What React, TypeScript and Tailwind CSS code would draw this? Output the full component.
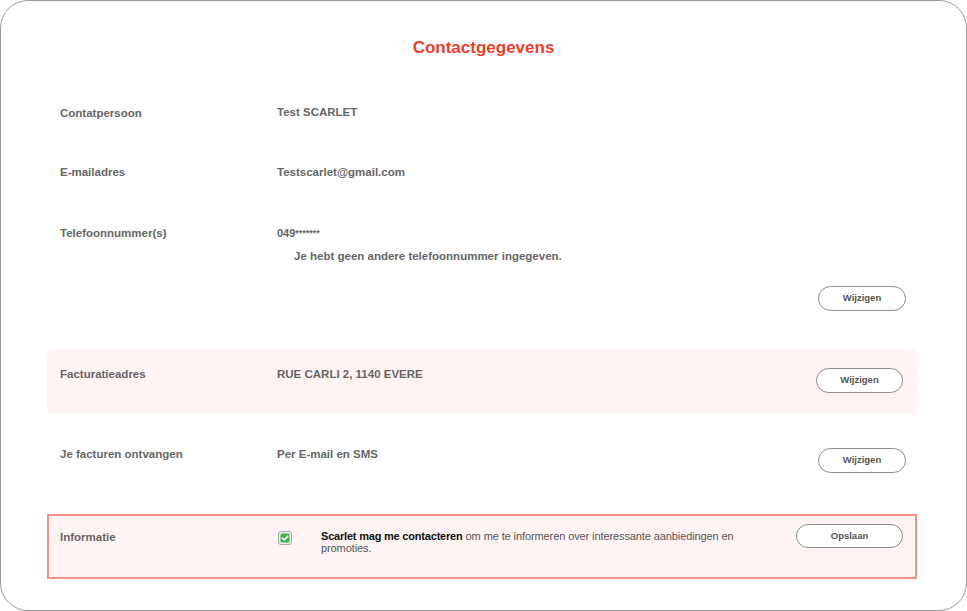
import React from "react";

const font = { fontFamily: '"Liberation Sans", Arial, Helvetica, sans-serif' };

function PillButton({ label, w = "w-[88px]", h = "h-[25px]" }: { label: string; w?: string; h?: string }) {
  return (
    <button
      className={`${w} ${h} shrink-0 rounded-full border border-[#8c8c8c] bg-white text-[9.5px] font-bold text-[#555] flex items-center justify-center`}
    >
      {label}
    </button>
  );
}

function CheckBox() {
  return (
    <svg width="14" height="14" viewBox="0 0 14 14" className="shrink-0">
      <rect x="0.5" y="0.5" width="13" height="13" rx="2.5" fill="#f1f1f1" stroke="#a9a9a9" />
      <rect x="2.5" y="2.5" width="9" height="9" rx="1.5" fill="#3bb54a" />
      <path d="M4.3 7.1 L6.2 8.9 L9.8 5.2" fill="none" stroke="#ffffff" strokeWidth="1.6" strokeLinecap="round" strokeLinejoin="round" />
    </svg>
  );
}

export default function App() {
  return (
    <div style={font} className="w-[967px] h-[611px] bg-white">
      <div className="w-[967px] h-[611px] box-border border border-[#9b9b9b] rounded-[28px] pl-[46px] pr-[49px] text-[11.5px] font-bold text-[#666]">
        <h1 className="mt-[37px] h-[20px] leading-[20px] text-center text-[17px] font-bold text-[#e8402f] pl-[3px]">
          Contactgegevens
        </h1>

        <div className="mt-[47px] flex pl-[13px] h-[16px] leading-[16px]">
          <div className="w-[217px] shrink-0">Contatpersoon</div>
          <div className="-mt-[1px]">Test SCARLET</div>
        </div>

        <div className="mt-[43px] flex pl-[13px] h-[16px] leading-[16px]">
          <div className="w-[217px] shrink-0">E-mailadres</div>
          <div>Testscarlet@gmail.com</div>
        </div>

        <div className="mt-[45px] flex pl-[13px]">
          <div className="w-[217px] shrink-0 h-[16px] leading-[16px]">Telefoonnummer(s)</div>
          <div>
            <div className="h-[16px] leading-[16px] text-[11px]">
              049<span className="text-[9px] align-top">*******</span>
            </div>
            <div className="mt-[7px] pl-[17px] h-[16px] leading-[16px]">
              Je hebt geen andere telefoonnummer ingegeven.
            </div>
          </div>
        </div>

        <div className="mt-[22px] flex justify-end pr-[11px]">
          <PillButton label="Wijzigen" />
        </div>

        <div className="mt-[39px] h-[64px] rounded-[5px] bg-[#fff3f3] flex items-start pt-[16px] pl-[13px] pr-[14px]">
          <div className="w-[217px] shrink-0 h-[16px] leading-[16px]">Facturatieadres</div>
          <div className="h-[16px] leading-[16px]">RUE CARLI 2, 1140 EVERE</div>
          <div className="ml-auto mt-[2px]">
            <PillButton label="Wijzigen" w="w-[87px]" />
          </div>
        </div>

        <div className="mt-[32px] flex items-start pl-[13px] pr-[11px]">
          <div className="w-[217px] shrink-0 h-[16px] leading-[16px]">Je facturen ontvangen</div>
          <div className="h-[16px] leading-[16px]">Per E-mail en SMS</div>
          <div className="ml-auto mt-[2px]">
            <PillButton label="Wijzigen" />
          </div>
        </div>

        <div className="mt-[41px] h-[65px] box-border border-2 border-[#f39089] bg-[#fff3f3] flex items-start pt-[8px] pl-[11px] pr-[12px]">
          <div className="w-[218px] shrink-0 mt-[5px] h-[16px] leading-[16px]">Informatie</div>
          <div className="mt-[7px]">
            <CheckBox />
          </div>
          <div className="ml-[29px] mt-[6px] w-[430px] text-[11px] leading-[12px]">
            <span className="font-bold text-[#111] tracking-[-0.2px]">Scarlet mag me contacteren</span>{" "}
            <span className="font-normal text-[#555] tracking-[-0.1px]">
              om me te informeren over interessante aanbiedingen en promoties.
            </span>
          </div>
          <div className="ml-auto">
            <PillButton label="Opslaan" w="w-[107px]" h="h-[24px]" />
          </div>
        </div>
      </div>
    </div>
  );
}
